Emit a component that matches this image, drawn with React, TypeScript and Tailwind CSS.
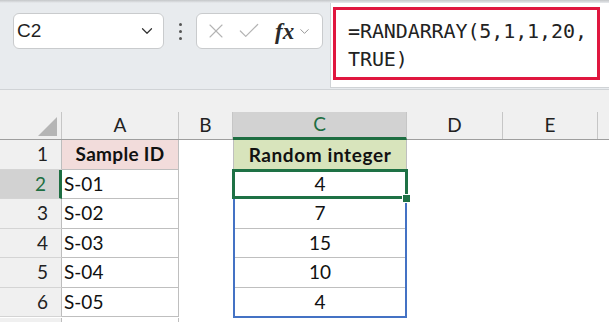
import { ChevronDown, X, Check } from 'lucide-react';

const cellFont = { fontFamily: 'Lato, "Open Sans", sans-serif' };

function RowHead({ n, active }: { n: number; active?: boolean }) {
  return (
    <div
      className={
        'w-[62px] shrink-0 flex items-center justify-end pr-[13px] border-b border-[#d4d4d4] text-[19px] ' +
        (active
          ? 'bg-[#d2d2d2] text-[#1e6e42] border-r-[3px] border-r-[#1e6e42]'
          : 'bg-[#f0f0f0] text-[#222] border-r border-r-[#bdbdbd]')
      }
    >
      {n}
    </div>
  );
}

const rows = [
  { id: 'S-02', val: '7' },
  { id: 'S-03', val: '15' },
  { id: 'S-04', val: '10' },
  { id: 'S-05', val: '4' },
];

export default function App() {
  return (
    <div className="w-[609px] h-[322px] overflow-hidden bg-white relative" style={cellFont}>
      {/* formula toolbar */}
      <div className="h-[90px] bg-[#e8ebee] border-b border-[#d0d3d6] relative">
        <div className="h-[3px] bg-gradient-to-b from-[#c4c6c8] to-[#e8ebee]" />
        <div className="flex items-start">
          <div
            className="ml-[13px] mt-[10px] w-[151px] h-[36px] bg-white border border-[#c9cbcd] rounded-[6px] flex items-center pl-[3px] pr-[7px] text-[19px] text-[#1f1f1f]"
            style={{ fontFamily: '"Liberation Sans", Arial, sans-serif' }}
          >
            <span className="flex-1">C2</span>
            <ChevronDown size={18} strokeWidth={1.6} className="text-[#333]" />
          </div>
          <div className="w-[32px] mt-[20px] flex flex-col items-center gap-[4px]">
            <span className="w-[3px] h-[3px] bg-[#555] rounded-full" />
            <span className="w-[3px] h-[3px] bg-[#555] rounded-full" />
            <span className="w-[3px] h-[3px] bg-[#555] rounded-full" />
          </div>
          <div className="mt-[10px] w-[127px] h-[36px] bg-white border border-[#c9cbcd] rounded-[6px] flex items-center pl-[7px] pr-[3px]">
            <X size={24} strokeWidth={1.1} className="text-[#b4b4b4]" />
            <Check size={26} strokeWidth={1.1} className="text-[#b4b4b4] ml-[8px]" />
            <span
              className="ml-[13px] text-[23px] italic font-bold text-[#2a2a2a] leading-none"
              style={{ fontFamily: '"Liberation Serif", "Times New Roman", serif' }}
            >
              fx
            </span>
            <ChevronDown size={15} strokeWidth={1.4} className="text-[#888] ml-[3px]" />
          </div>
          <div className="ml-[7px] flex-1 h-[85px] bg-white border-l border-b border-[#d0d3d6] pl-[2px] pt-[4px] pr-[9px]">
            <div
              className="h-[73px] border-[3px] border-[#e0173f] pl-[12px] pt-[7px] text-[20px] leading-[28px] text-[#222]"
              style={{ fontFamily: '"DejaVu Sans Mono", "Liberation Mono", monospace', letterSpacing: '-0.1px' }}
            >
              <div>=RANDARRAY(5,1,1,20,</div>
              <div>TRUE)</div>
            </div>
          </div>
        </div>
      </div>

      {/* gap above column headers */}
      <div className="h-[22px] bg-[#f0f0f0]" />

      {/* column headers */}
      <div className="flex h-[28px] bg-[#f0f0f0] border-b border-[#9e9e9e] text-[19px] text-[#222]">
        <div className="w-[62px] shrink-0 relative border-r border-[#c6c6c6]">
          <svg className="absolute left-[38px] top-[5px]" width="19" height="19" viewBox="0 0 19 19">
            <polygon points="19,0 19,19 0,19" fill="#b5b5b5" />
          </svg>
        </div>
        <div className="w-[117px] shrink-0 flex items-center justify-center border-r border-[#c6c6c6]">A</div>
        <div className="w-[54px] shrink-0 flex items-center justify-center border-r border-[#c6c6c6]">B</div>
        <div className="w-[174px] shrink-0 flex items-center justify-center bg-[#d2d2d2] text-[#1e6e42] border-r border-[#c6c6c6] border-b-[3px] border-b-[#1e6e42] -mb-px">
          C
        </div>
        <div className="w-[96px] shrink-0 flex items-center justify-center border-r border-[#c6c6c6]">D</div>
        <div className="w-[95px] shrink-0 flex items-center justify-center border-r border-[#c6c6c6]">E</div>
        <div className="flex-1" />
      </div>

      {/* row 1 */}
      <div className="flex h-[29.5px] text-[19px] text-[#111]">
        <RowHead n={1} />
        <div className="w-[117px] shrink-0 bg-[#f2dcdb] border-r border-b border-[#bfbfbf] flex items-center justify-center font-bold tracking-[0.3px]">
          Sample ID
        </div>
        <div className="w-[54px] shrink-0" />
        <div className="w-[174px] shrink-0 bg-[#d8e4bc] border-l border-r border-[#bfbfbf] flex items-center justify-center font-bold tracking-[0.6px]">
          Random integer
        </div>
        <div className="flex-1" />
      </div>

      {/* row 2 */}
      <div className="flex h-[29.5px] text-[19px] text-[#111]">
        <RowHead n={2} active />
        <div className="w-[117px] shrink-0 border-r border-b border-[#bfbfbf] flex items-center pl-[2px]">S-01</div>
        <div className="w-[54px] shrink-0" />
        <div className="w-[174px] shrink-0 relative flex items-center justify-center">
          4
          <div className="absolute -left-[1px] -top-[1px] -right-[1px] bottom-0 border-[3px] border-[#1e7145]" />
          <div className="absolute -right-[4px] -bottom-[4px] w-[7px] h-[7px] bg-[#1e7145] border border-white box-content" />
        </div>
        <div className="flex-1" />
      </div>

      {/* rows 3-6 beside the spill range */}
      <div className="flex text-[19px] text-[#111]">
        <div className="flex flex-col">
          {rows.map((r, i) => (
            <div key={r.id} className="flex h-[29.5px]">
              <RowHead n={i + 3} />
              <div className="w-[117px] shrink-0 border-r border-b border-[#bfbfbf] flex items-center pl-[2px]">
                {r.id}
              </div>
              <div className="w-[54px] shrink-0" />
            </div>
          ))}
        </div>
        <div className="w-[174px] shrink-0 h-[120px] border-l-2 border-r-2 border-b-2 border-[#4472c4] -mt-[1px] pt-[1px]">
          {rows.map((r, i) => (
            <div
              key={r.id}
              className={
                'h-[29.5px] flex items-center justify-center ' + (i < 3 ? 'border-b border-[#bfbfbf]' : '')
              }
            >
              {r.val}
            </div>
          ))}
        </div>
        <div className="flex-1" />
      </div>

      {/* remaining row-header strip */}
      <div className="flex h-[10px]">
        <div className="w-[62px] bg-[#f0f0f0] border-r border-[#bdbdbd]" />
        <div className="w-[117px] border-r border-[#bfbfbf]" />
      </div>
    </div>
  );
}
